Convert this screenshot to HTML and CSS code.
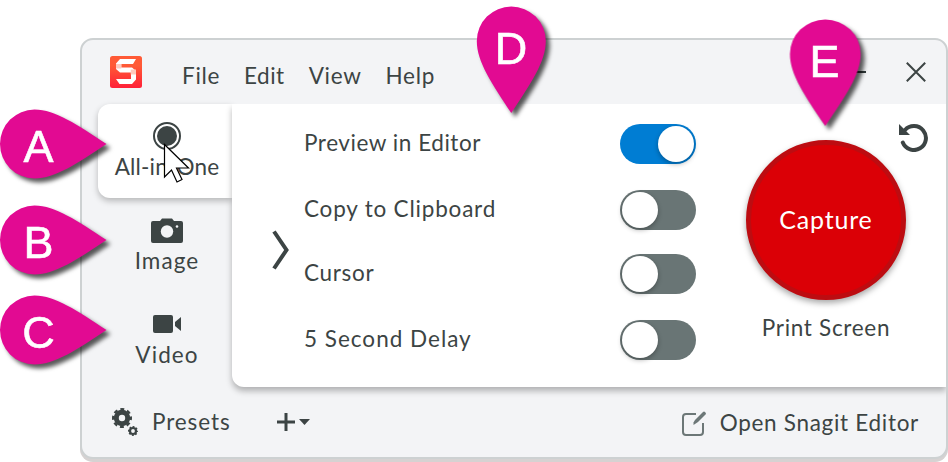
FILE: index.html
```html
<!DOCTYPE html>
<html lang="en">
<head>
    <meta charset="UTF-8">
    <meta name="viewport" content="width=device-width, initial-scale=1.0">
    <title>Snagit Capture Window</title>
    <link rel="stylesheet" href="styles.css">
</head>
<body>

    <div class="window">
        <!-- Title bar -->
        <header class="titlebar">
            <svg class="logo" width="32" height="32" viewBox="0 0 32 32">
                <defs>
                    <linearGradient id="logoFill" x1="0" y1="0" x2="0" y2="1">
                        <stop offset="0.3" stop-color="#ff5a36"/>
                        <stop offset="1" stop-color="#ff2038"/>
                    </linearGradient>
                </defs>
                <rect width="32" height="32" rx="2.5" fill="url(#logoFill)"/>
                <path d="M26 3H10L6 7.500V13l4 3.500h11V23H6l3.500 5H22l4-4.500V15l-4-3.500H11.300V8H23z" fill="#fff"/>
                <path d="M6 8h5.300v4.500H6zM20.700 13.500H26v5h-5.300z" fill="#ffc9bd"/>
            </svg>
            <nav class="menu">
                <span class="file">File</span>
                <span class="edit">Edit</span>
                <span class="view">View</span>
                <span class="help">Help</span>
            </nav>
            <div class="window-buttons">
                <svg width="20" height="20" viewBox="0 0 20 20"><path d="M0 10h20" stroke="#30393a" stroke-width="2"/></svg>
                <svg width="20" height="20" viewBox="0 0 20 20"><path d="M.8.8l18.400 18.400M19.200.8L.8 19.200" stroke="#3c4444" stroke-width="2"/></svg>
            </div>
        </header>

        <main class="content">
            <!-- Capture mode tabs -->
            <aside class="tabs">
                <div class="tab active">
                    <svg width="28" height="28" viewBox="0 0 28 28"><circle cx="14" cy="14" r="13" fill="none" stroke="#3c4444" stroke-width="2"/><circle cx="14" cy="14" r="10" fill="#3c4444"/></svg>
                    <span class="all">All-in-One</span>
                </div>
                <div class="tab">
                    <svg width="32" height="28" viewBox="0 0 32 28"><path d="M2 5h7l2-2.500h10L23 5h7q2 0 2 2v18q0 2-2 2H2q-2 0-2-2V7q0-2 2-2z" fill="#3c4444"/><circle cx="16" cy="15.500" r="6.200" fill="#f3f4f6"/><circle cx="26" cy="10.500" r="1.300" fill="#f3f4f6"/></svg>
                    <span class="image">Image</span>
                </div>
                <div class="tab">
                    <svg width="28" height="28" viewBox="0 0 28 28"><rect y="5" width="20" height="18" rx="2" fill="#3c4444"/><path d="M28 7v14l-6-5v-4z" fill="#3c4444"/></svg>
                    <span class="video">Video</span>
                </div>
            </aside>

            <!-- Capture settings -->
            <section class="panel">
                <svg class="chevron" width="18" height="40" viewBox="0 0 18 40"><path d="M2 1.500L14.500 20 2 38.500" fill="none" stroke="#3c4444" stroke-width="4"/></svg>
                <div class="options">
                    <div class="option"><span class="preview">Preview in Editor</span><i class="toggle on"></i></div>
                    <div class="option"><span class="copy">Copy to Clipboard</span><i class="toggle"></i></div>
                    <div class="option"><span class="cursor-label">Cursor</span><i class="toggle"></i></div>
                    <div class="option"><span class="delay">5 Second Delay</span><i class="toggle"></i></div>
                </div>
                <div class="capture">
                    <svg class="reset" width="30" height="30" viewBox="0 0 30 30"><path d="M6 8A12 12 0 1 1 3.800 20.500" fill="none" stroke="#3c4444" stroke-width="4" stroke-linecap="round"/><path d="M0 2V13h11z" fill="#3c4444"/></svg>
                    <button class="capture-btn">Capture</button>
                    <span class="hotkey">Print Screen</span>
                </div>
            </section>
        </main>

        <!-- Bottom bar -->
        <footer class="bottombar">
            <svg width="28" height="28" viewBox="0 0 28 28" fill="none" stroke="#3c4444">
                <circle cx="10" cy="10" r="5.700" stroke-width="5"/>
                <circle cx="10" cy="10" r="8.800" stroke-width="2.400" stroke-dasharray="3.912 3" stroke-dashoffset="1.950"/>
                <circle cx="21" cy="23" r="3" stroke-width="2.200"/>
                <circle cx="21" cy="23" r="4.300" stroke-width="1.400" stroke-dasharray="1.900 1.477" stroke-dashoffset=".95"/>
            </svg>
            <span class="presets">Presets</span>
            <svg class="add" width="33" height="18" viewBox="0 0 33 18"><path d="M0 9h18M9 0v18" stroke="#3c4444" stroke-width="3"/><path d="M22 6h11l-5.500 6z" fill="#3c4444"/></svg>
            <svg class="edit-icon" width="25" height="25" viewBox="0 0 25 25" fill="none" stroke="#6c7777" stroke-width="2"><path d="M14 3H4Q1 3 1 6v15q0 3 3 3h14q3 0 3-3v-9"/><path d="M11.500 11.500L13 9 21 1q1-1 2 0t1 2l-8 8-4.500 3z" fill="#6c7777" stroke="none"/></svg>
            <span class="open">Open Snagit Editor</span>
        </footer>
    </div>

    <!-- Callout pins -->
    <svg class="callouts" width="948" height="462" viewBox="0 0 948 462">
        <defs>
            <path id="pin" d="M0-34.500A34.500 34.500 0 0 1 34.500 0C34.500 21 19 43 0 72 -19 43-34.500 21-34.500 0A34.500 34.500 0 0 1 0-34.500z"/>
        </defs>
        <g class="pins">
            <use href="#pin" transform="translate(34.500 144) rotate(-90)"/>
            <use href="#pin" transform="translate(34.500 240) rotate(-90)"/>
            <use href="#pin" transform="translate(34.500 330) rotate(-90)"/>
            <use href="#pin" transform="translate(511.300 41)"/>
            <use href="#pin" transform="translate(825.300 54) scale(1.025 1)"/>
        </g>
        <g class="pin-letters">
            <text x="38.500" y="162">A</text>
            <text x="38.500" y="258">B</text>
            <text x="38.500" y="348">C</text>
            <text x="511" y="64">D</text>
            <text x="824.500" y="77">E</text>
        </g>
        <path d="M164.500 144.500v32.500l7-7 5.500 12 5-2.500-5.500-11.500h12z" fill="#fff" stroke="#000" stroke-width="1.200"/>
    </svg>

</body>
</html>
```
FILE: styles.css
```css
/* General Reset */
* {
    margin: 0;
    padding: 0;
    box-sizing: border-box;
}

body {
    font-family: Lato, sans-serif;
    font-size: 22.5px;
    line-height: 28px;
    letter-spacing: 0.7px;
    color: #3c4444;
    background-color: #fff;
    padding: 38px 0 0 80px;
    height: 462px;
    overflow: hidden;
    white-space: nowrap;
}

svg {
    display: block;
    flex-shrink: 0;
}

/* Window */
.window {
    width: 868px;
    height: 421px;
    background-color: #f3f4f6;
    border: 2px solid #cdd1d2;
    border-radius: 13px;
    box-shadow: 0 3px 0 #d6d2d2;
    display: flex;
    flex-direction: column;
}

/* Title Bar */
.titlebar {
    height: 64px;
    display: flex;
    align-items: center;
    padding: 0 20px 0 28px;
}

.menu {
    display: flex;
    gap: 24px;
    margin: 7px 0 0 40px;
}

.edit {
    letter-spacing: 0.5px;
}

.window-buttons {
    display: flex;
    gap: 40px;
    margin-left: auto;
}

/* Tabs */
.content {
    height: 283px;
    display: flex;
}

.tabs {
    width: 150px;
    padding-left: 16px;
}

.tab {
    height: 94px;
    padding: 18px 0 0 4px;
    display: flex;
    flex-direction: column;
    align-items: center;
    gap: 3px;
}

.tab.active {
    background-color: #fff;
    border-radius: 12px 0 0 12px;
    box-shadow: 0 3px 6px rgba(0, 0, 0, 0.25);
}

.all {
    letter-spacing: 0.2px;
}

.image,
.video {
    letter-spacing: 1.1px;
}

/* Settings Panel */
.panel {
    flex: 1;
    position: relative;
    display: flex;
    background-color: #fff;
    border-bottom-left-radius: 12px;
    box-shadow: 0 4px 6px rgba(0, 0, 0, 0.28);
    clip-path: inset(0 0 -12px -8px);
}

.chevron {
    margin: 126px 14px 0 40px;
}

.options {
    width: 392px;
    padding-top: 20px;
    display: grid;
    grid-template-rows: 66px 64px 66px 40px;
}

.option {
    height: 40px;
    display: flex;
    justify-content: space-between;
    align-items: center;
}

.option span {
    padding-bottom: 2px;
}

.preview {
    letter-spacing: 0.55px;
}

.copy {
    letter-spacing: 0.8px;
}

.delay {
    letter-spacing: 1px;
}

.toggle {
    width: 76px;
    height: 40px;
    padding: 2px;
    border-radius: 20px;
    background-color: #697575;
}

.toggle::before {
    content: "";
    display: block;
    width: 36px;
    height: 36px;
    border-radius: 50%;
    background-color: #fff;
    box-shadow: 0 2px 5px rgba(0, 0, 0, 0.3);
}

.toggle.on {
    background-color: #007dd3;
}

.toggle.on::before {
    margin-left: auto;
}

/* Capture Button */
.capture {
    width: 160px;
    margin-left: 50px;
    display: flex;
    flex-direction: column;
    align-items: center;
}

.reset {
    align-self: flex-end;
    margin: 18px -23px -12px 0;
}

.capture-btn {
    width: 160px;
    height: 160px;
    padding-bottom: 3px;
    border: 5px solid #bd0c11;
    border-radius: 50%;
    background-color: #db0006;
    box-shadow: 0 3px 6px rgba(0, 0, 0, 0.35);
    color: #fff;
    font-family: inherit;
    font-size: 25px;
    letter-spacing: 0.8px;
}

.hotkey {
    margin-top: 14px;
}

/* Bottom Bar */
.bottombar {
    flex: 1;
    display: flex;
    align-items: center;
    padding: 0 28px 0 30px;
}

.presets {
    margin-left: 12px;
    letter-spacing: 0.9px;
}

.add {
    margin-left: 46px;
}

.edit-icon {
    margin: 2px 13px 0 auto;
}

.open {
    padding-top: 2px;
    margin-right: -1px;
}

/* Callouts */
.callouts {
    position: absolute;
    left: 0;
    top: 0;
}

.pins {
    fill: #e20a92;
    filter: drop-shadow(4px 4px 2px rgba(0, 0, 0, 0.65));
}

.pin-letters {
    font-family: "Liberation Sans", Arial, sans-serif;
    font-size: 45px;
    letter-spacing: 0;
    text-anchor: middle;
    fill: #fff;
    stroke: #fff;
    stroke-width: 0.6px;
}
```
